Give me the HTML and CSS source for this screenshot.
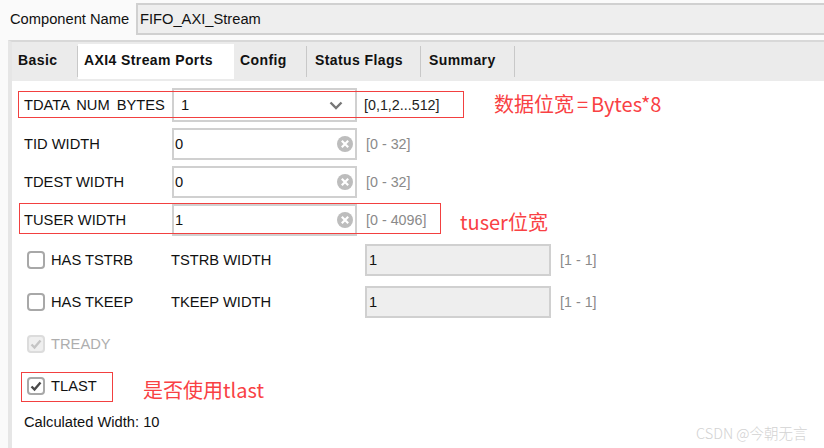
FILE: index.html
```html
<!DOCTYPE html>
<html lang="en">
<head>
<meta charset="utf-8">
<title>FIFO AXI Stream</title>
<link rel="stylesheet" href="styles.css">
</head>
<body>
<div class="name-row">
  <span class="name-label">Component Name</span>
  <div class="name-input">FIFO_AXI_Stream</div>
</div>
<div class="panel">
  <div class="tabs">
    <div class="tab tab-basic">Basic</div>
    <div class="tab tab-active">AXI4 Stream Ports</div>
    <div class="tab tab-config">Config</div>
    <div class="tab tab-flags">Status Flags</div>
    <div class="tab tab-summary">Summary</div>
  </div>
  <div class="content">
    <div class="row row-first">
      <span class="label label-wide">TDATA NUM BYTES</span>
      <div class="field field-select"><span>1</span>
        <svg class="chev" width="14" height="9" viewBox="0 0 14 9"><path d="M1.500 1.500l5.500 5.500 5.500-5.500" fill="none" stroke="#777" stroke-width="2.400"/></svg>
      </div>
      <span class="range range-dark">[0,1,2...512]</span>
    </div>
    <div class="row">
      <span class="label">TID WIDTH</span>
      <div class="field"><span>0</span>
        <svg class="clear" width="16" height="16" viewBox="0 0 16 16"><circle cx="8" cy="8" r="8" fill="#bdbdbd"/><path d="M4.800 4.800l6.400 6.400M11.200 4.800l-6.400 6.400" stroke="#fff" stroke-width="2.200"/></svg>
      </div>
      <span class="range">[0 - 32]</span>
    </div>
    <div class="row">
      <span class="label">TDEST WIDTH</span>
      <div class="field"><span>0</span>
        <svg class="clear" width="16" height="16" viewBox="0 0 16 16"><circle cx="8" cy="8" r="8" fill="#bdbdbd"/><path d="M4.800 4.800l6.400 6.400M11.200 4.800l-6.400 6.400" stroke="#fff" stroke-width="2.200"/></svg>
      </div>
      <span class="range">[0 - 32]</span>
    </div>
    <div class="row">
      <span class="label">TUSER WIDTH</span>
      <div class="field"><span>1</span>
        <svg class="clear" width="16" height="16" viewBox="0 0 16 16"><circle cx="8" cy="8" r="8" fill="#bdbdbd"/><path d="M4.800 4.800l6.400 6.400M11.200 4.800l-6.400 6.400" stroke="#fff" stroke-width="2.200"/></svg>
      </div>
      <span class="range">[0 - 4096]</span>
    </div>
    <div class="row row-check row-check-first">
      <span class="check-wrap"><span class="box"></span>HAS TSTRB</span>
      <span class="sublabel">TSTRB WIDTH</span>
      <div class="field field-off">1</div>
      <span class="range">[1 - 1]</span>
    </div>
    <div class="row row-check">
      <span class="check-wrap"><span class="box"></span>HAS TKEEP</span>
      <span class="sublabel">TKEEP WIDTH</span>
      <div class="field field-off">1</div>
      <span class="range">[1 - 1]</span>
    </div>
    <div class="line line-ready">
      <span class="check-wrap muted"><span class="box box-muted"><svg width="14" height="14" viewBox="0 0 14 14"><path d="M2.500 7.500l3 3 6-7" fill="none" stroke="#c4c4c4" stroke-width="2.400"/></svg></span>TREADY</span>
    </div>
    <div class="line line-last">
      <span class="check-wrap"><span class="box"><svg width="14" height="14" viewBox="0 0 14 14"><path d="M2.500 7.500l3 3 6-7" fill="none" stroke="#4a4a4a" stroke-width="2.400"/></svg></span>TLAST</span>
    </div>
    <div class="calc">Calculated Width: 10</div>
  </div>
</div>
<div class="mark mark-data"></div>
<div class="mark mark-user"></div>
<div class="mark mark-last"></div>
<div class="note note-data">数据位宽<span class="eq">=</span>Bytes*8</div>
<div class="note note-user">tuser位宽</div>
<div class="note note-last">是否使用tlast</div>
<div class="watermark">CSDN @今朝无言</div>
</body>
</html>
```
FILE: styles.css
```css
* { box-sizing: border-box; }
html, body { margin: 0; padding: 0; }
body {
  position: relative;
  width: 824px;
  height: 448px;
  overflow: hidden;
  background: #fafafa;
  color: #111;
  font-family: "Liberation Sans", Arial, sans-serif;
  font-size: 14.7px;
}
.name-row {
  height: 40px;
  padding: 3px 0 0 10px;
  display: flex;
  align-items: flex-start;
}
.name-label { width: 126px; line-height: 32px; }
.name-input {
  flex: 1;
  height: 32px;
  line-height: 28px;
  padding-left: 2px;
  background: #eee;
  border: 2px solid #d0d0d0;
  border-right: 0;
}
.panel {
  margin-left: 8px;
  height: 408px;
  border-top: 2px solid #d8d8d8;
  border-left: 4px solid #e6e6e6;
  background: #fff;
}
.tabs {
  height: 39px;
  padding-top: 2px;
  background: #ebebeb;
  display: flex;
  border-top: 2px solid #ebebeb;
}
.tab {
  height: 31px;
  line-height: 29px;
  font-size: 14px;
  font-weight: 700;
  letter-spacing: 0.4px;
  border-right: 1px solid #c8c8c8;
  color: #111;
}
.tab-basic { width: 66px; padding-left: 6px; }
.tab-active { width: 156px; height: 35px; margin-top: -2px; padding: 2px 0 0 6px; background: #fff; border-right: 0; }
.tab-config { width: 73px; padding-left: 6px; }
.tab-flags { width: 114px; padding-left: 8px; }
.tab-summary { width: 94px; padding-left: 8px; }
.content { background: #fff; height: 367px; padding: 7px 0 0 12px; }
.row { display: flex; align-items: center; height: 32px; margin-bottom: 6px; }
.row-first { height: 34px; margin-bottom: 6px; }
.label { width: 148px; }
.label-wide { word-spacing: 3px; white-space: nowrap; }
.field {
  width: 185px;
  height: 100%;
  padding: 0 2px 0 1px;
  border: 2px solid #d0d0d0;
  background: #fff;
  display: flex;
  align-items: center;
  justify-content: space-between;
}
.field-select { padding-left: 7px; }
.chev { margin-right: 10px; }
.range { margin-left: 9px; color: #8a8a8a; font-size: 14.3px; }
.range-dark { color: #222; margin-left: 7px; }
.row-check { margin-bottom: 10px; padding-left: 3px; }
.row-check-first { margin-top: 8px; }
.check-wrap { display: flex; align-items: center; width: 144px; }
.sublabel { width: 194px; }
.box {
  width: 18px;
  height: 18px;
  margin-right: 6px;
  border: 2px solid #a8a8a8;
  border-radius: 4px;
  background: #fff;
  display: flex;
  align-items: center;
  justify-content: center;
}
.box-muted { border-color: #dcdcdc; background: #efefef; }
.muted { color: #aeaeae; }
.field-off { background: #eee; padding-left: 2px; width: 186px; }
.line { height: 18px; line-height: 18px; padding-left: 3px; }
.line-ready { margin-top: 17px; }
.line-last { margin-top: 24px; }
.calc { margin-top: 19px; }
.mark { position: absolute; border: 1px solid #f24040; }
.mark-data { left: 18px; top: 91px; width: 446px; height: 27px; }
.mark-user { left: 19px; top: 203px; width: 422px; height: 31px; }
.mark-last { left: 21px; top: 372px; width: 92px; height: 30px; }
.note { position: absolute; color: #f94144; font-family: "Noto Sans CJK SC", sans-serif; font-size: 20px; font-weight: 400; line-height: 28px; white-space: nowrap; }
.eq { margin: 0 3px; }
.note-data { left: 494px; top: 90px; }
.note-user { left: 460px; top: 208px; }
.note-last { left: 143px; top: 376px; }
.watermark { position: absolute; left: 696px; top: 423px; color: #d2d2d2; font-family: "Noto Sans CJK SC", sans-serif; font-size: 14.5px; font-weight: 300; line-height: 20px; white-space: nowrap; }
```
